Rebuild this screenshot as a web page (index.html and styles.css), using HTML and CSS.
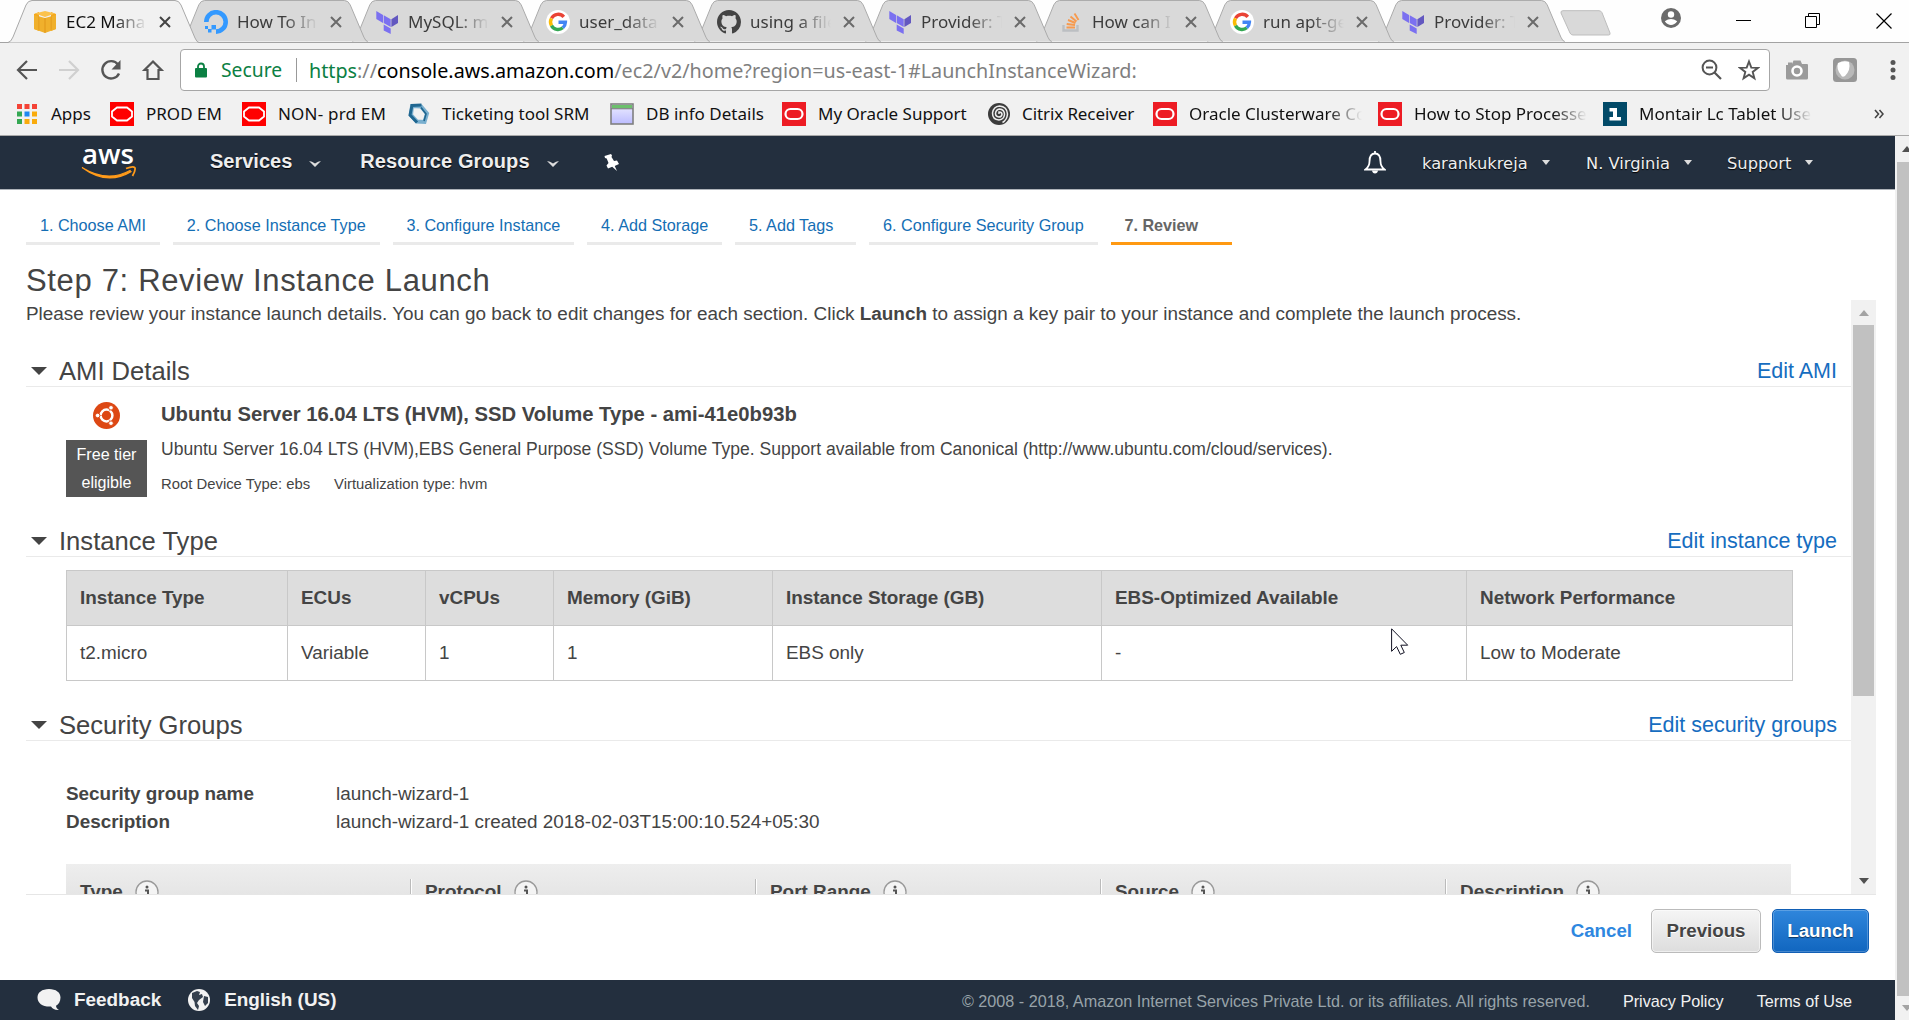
FILE: index.html
```html
<!DOCTYPE html>
<html lang="en">
<head>
<meta charset="utf-8">
<title>EC2 Management Console</title>
<link rel="stylesheet" href="styles.css">
</head>
<body>
<svg class="defs" aria-hidden="true">
  <defs>
    <symbol id="tab-shape" viewBox="0 0 191 43"><path d="M0 42.5Q3 42 5 37L18 5Q20 .5 24 .5H167Q171 .5 173 5L187 38Q189 42.5 191 42.5"/></symbol>
    <symbol id="close" viewBox="0 0 12 12"><path d="M1 1l10 10M11 1L1 11" fill="none" stroke="currentColor" stroke-width="2"/></symbol>
    <symbol id="terraform" viewBox="0 0 24 24"><path fill="#7b70f0" d="M1.3 1l6.700 4v8L1.300 9zM8.700 5.200l7 4v7.800l-7-4zM8.700 14.500l7 4V24l-7-3.500z"/><path fill="#6358c0" d="M16.400 9.200L23 5v8l-6.600 4z"/></symbol>
    <symbol id="google" viewBox="0 0 24 24"><circle cx="12" cy="12" r="12" fill="#fff"/><g fill="none" stroke-width="3.400"><path stroke="#ea4335" d="M17.800 6.900A7.500 7.500 0 0 0 5.500 8.300"/><path stroke="#fbbc05" d="M5.500 8.300a7.500 7.500 0 0 0 0 7.400"/><path stroke="#34a853" d="M5.500 15.700a7.500 7.500 0 0 0 11.300 2.100"/><path stroke="#4285f4" d="M16.800 17.800a7.500 7.500 0 0 0 2.600-5.500H12.500"/></g></symbol>
    <symbol id="oracle" viewBox="0 0 24 24"><rect width="24" height="24" fill="#ed1c24"/><rect x="3.500" y="7" width="17" height="10" rx="5" fill="none" stroke="#fff" stroke-width="2.200"/></symbol>
    <symbol id="oracle-em" viewBox="0 0 24 24"><rect width="24" height="24" fill="#f00"/><path d="M7 5.500h10l5 4v5l-5 4H7l-5-4v-5z" fill="none" stroke="#fff" stroke-width="1.800"/><ellipse cx="12" cy="12" rx="9" ry="4.600" fill="#f00"/></symbol>
    <symbol id="info" viewBox="0 0 24 24"><circle cx="12" cy="12" r="11" fill="#f4f4f4" stroke="#999" stroke-width="1.300"/><path d="M10 10.500h3V17M9.500 17.500h6" fill="none" stroke="#555" stroke-width="2"/><circle cx="12" cy="7" r="1.500" fill="#555"/></symbol>
  </defs>
</svg>

<header class="chrome">
  <div class="tabstrip">
    <div class="tab active"><svg class="shape"><use href="#tab-shape"/></svg>
      <svg class="fav" viewBox="0 0 24 24"><path fill="#f5a81c" d="M1 4l5-2v19l-5-2zM18 2l5 2v15l-5 2z"/><path fill="#f0b02c" d="M1 5l11 3 11-3v14l-11 4-11-4z"/><path fill="#fbc24c" d="M2 3.500L12 1l10 2.500L12 7z"/><path fill="#d98c10" d="M11 8h2v15h-2zM5 6l1.500.500V20L5 19.500zM19 6l-1.500.500V20l1.500-.500z" opacity=".35"/></svg>
      <span class="title">EC2 Mana</span><svg class="x"><use href="#close"/></svg></div>
    <div class="tab"><svg class="shape"><use href="#tab-shape"/></svg>
      <svg class="fav" viewBox="0 0 24 24"><path d="M2.300 12A9.700 9.700 0 1 1 12 21.600" fill="none" stroke="#3399ff" stroke-width="4.600"/><path fill="#3399ff" d="M7.500 15H12v4.500H7.500zM4 19h3.500v3.500H4zM1 16h3v3H1z"/></svg>
      <span class="title">How To In</span><svg class="x"><use href="#close"/></svg></div>
    <div class="tab"><svg class="shape"><use href="#tab-shape"/></svg><svg class="fav"><use href="#terraform"/></svg><span class="title">MySQL: m</span><svg class="x"><use href="#close"/></svg></div>
    <div class="tab"><svg class="shape"><use href="#tab-shape"/></svg><svg class="fav"><use href="#google"/></svg><span class="title">user_data</span><svg class="x"><use href="#close"/></svg></div>
    <div class="tab"><svg class="shape"><use href="#tab-shape"/></svg>
      <svg class="fav" viewBox="0 0 16 16"><path fill="#444" fill-rule="evenodd" d="M8 0C3.580 0 0 3.580 0 8c0 3.540 2.290 6.530 5.470 7.590.4.070.55-.17.55-.38 0-.19-.01-.82-.01-1.490-2.010.37-2.530-.49-2.690-.94-.09-.23-.48-.94-.82-1.130-.28-.15-.68-.52-.01-.53.63-.01 1.080.58 1.230.82.72 1.210 1.870.87 2.330.66.07-.52.28-.87.51-1.070-1.780-.2-3.640-.89-3.640-3.950 0-.87.31-1.590.82-2.150-.08-.2-.36-1.020.08-2.120 0 0 .67-.21 2.200.82.64-.18 1.320-.27 2-.27s1.360.09 2 .27c1.530-1.040 2.200-.82 2.200-.82.44 1.100.16 1.920.08 2.120.51.56.82 1.270.82 2.150 0 3.070-1.870 3.750-3.650 3.950.29.25.54.73.54 1.480 0 1.070-.01 1.930-.01 2.200 0 .21.15.46.55.38A8.010 8.010 0 0 0 16 8c0-4.420-3.580-8-8-8z"/></svg>
      <span class="title">using a file</span><svg class="x"><use href="#close"/></svg></div>
    <div class="tab"><svg class="shape"><use href="#tab-shape"/></svg><svg class="fav"><use href="#terraform"/></svg><span class="title">Provider: T</span><svg class="x"><use href="#close"/></svg></div>
    <div class="tab"><svg class="shape"><use href="#tab-shape"/></svg>
      <svg class="fav" viewBox="0 0 24 24"><path d="M4.500 15v5.500h14V15" fill="none" stroke="#bcbfc2" stroke-width="2.400"/><path d="M7.500 17.500h8.500M7.700 14l8.300 1M9 10l7.500 3M11.500 6.500l6 5M15.500 3.500l4 6.500" stroke="#f79a4e" stroke-width="1.900"/></svg>
      <span class="title">How can I</span><svg class="x"><use href="#close"/></svg></div>
    <div class="tab"><svg class="shape"><use href="#tab-shape"/></svg><svg class="fav"><use href="#google"/></svg><span class="title">run apt-ge</span><svg class="x"><use href="#close"/></svg></div>
    <div class="tab"><svg class="shape"><use href="#tab-shape"/></svg><svg class="fav"><use href="#terraform"/></svg><span class="title">Provider: T</span><svg class="x"><use href="#close"/></svg></div>
    <svg class="newtab" viewBox="0 0 51 26"><path d="M3 .7h36q2 0 3 2L50 23q.6 2-1.500 2H13q-2 0-3-2L1 3Q.5.7 3 .7z" fill="#d9d9d9" stroke="#bdbdbd"/></svg>
    <div class="window-controls">
      <svg width="20" height="20" viewBox="0 0 20 20"><circle cx="10" cy="10" r="10" fill="#6b6b6b"/><circle cx="10" cy="6.500" r="3.200" fill="#fff"/><path d="M3.800 13.200q6.200-4.600 12.400 0Q13.500 17 10 17t-6.200-3.800z" fill="#fff"/></svg>
      <svg width="16" height="16" viewBox="0 0 16 16"><path d="M0 7.500h15" stroke="#000"/></svg>
      <svg width="16" height="16" viewBox="0 0 16 16"><path d="M.5 3.500h11v11H.5zM3.500 3V.5h11v11H12" fill="none" stroke="#000"/></svg>
      <svg width="16" height="16" viewBox="0 0 16 16"><path d="M.5.500l15 15M15.500.500l-15 15" stroke="#000" stroke-width="1.200"/></svg>
    </div>
  </div>

  <div class="toolbar">
    <svg class="tool" viewBox="0 0 24 24"><path d="M22 12H3.500M12 3L3 12l9 9" fill="none" stroke="#555" stroke-width="2.200"/></svg>
    <svg class="tool" viewBox="0 0 24 24"><path d="M2 12h18.500M12 3l9 9-9 9" fill="none" stroke="#d0d0d0" stroke-width="2.200"/></svg>
    <svg class="tool" viewBox="0 0 24 24"><path d="M20 15.500A8.700 8.700 0 1 1 19 6.500" fill="none" stroke="#555" stroke-width="2.400"/><path d="M21.500 2v9.500H12.500z" fill="#555"/></svg>
    <svg class="tool" viewBox="0 0 24 24"><path d="M12 3.500l8.500 8.500H17.500v9h-11v-9H3.500z" fill="none" stroke="#555" stroke-width="2.200"/></svg>
    <div class="omnibox">
      <svg class="lock" viewBox="0 0 12 16"><path d="M3 7V4.500a3 3 0 0 1 6 0V7" fill="none" stroke="#0b8043" stroke-width="1.800"/><rect y="6" width="12" height="9.500" rx="1" fill="#0b8043"/></svg>
      <span class="secure">Secure</span>
      <span class="url"><i>https</i>://<b>console.aws.amazon.com</b>/ec2/v2/home?region=us-east-1#LaunchInstanceWizard:</span>
      <svg class="zoom" viewBox="0 0 22 22"><circle cx="8.500" cy="8.500" r="6.900" fill="none" stroke="#555" stroke-width="2"/><path d="M5 8.500h7M13.500 13.500l6.500 6.500" stroke="#555" stroke-width="2.200"/></svg>
      <svg class="star" viewBox="0 0 22 22"><path d="M11 2.500l2.300 6.100 6.500.3-5.100 4 1.700 6.300-5.400-3.600-5.400 3.600 1.700-6.300-5.100-4 6.500-.3z" fill="none" stroke="#555" stroke-width="1.900"/></svg>
    </div>
    <svg class="ext" viewBox="0 0 24 24"><path d="M1 7h2V4.500h4V6l1.500-3.500h7L17 6h5q1 0 1 1v13q0 1.500-1.500 1.500h-19Q1 21.500 1 20z" fill="#9b9b9b"/><circle cx="12" cy="13" r="4.500" fill="#9b9b9b" stroke="#fff" stroke-width="2.600"/></svg>
    <svg class="ext" viewBox="0 0 24 24"><rect width="24" height="24" rx="3.500" fill="#979797"/><circle cx="12" cy="12" r="9.500" fill="#b9b9b9"/><path d="M5 5q6-3 11-1 2 8-4 14-3 2-4-1Q3 11 5 5z" fill="#fff"/></svg>
    <svg class="dots" viewBox="0 0 6 20"><g fill="#555"><circle cx="3" cy="2.500" r="2.500"/><circle cx="3" cy="10" r="2.500"/><circle cx="3" cy="17.500" r="2.500"/></g></svg>
  </div>

  <nav class="bookmarks">
    <a class="apps"><svg viewBox="0 0 20 20"><path fill="#f44336" d="M0 0h5v5H0zM7.500 0h5v5h-5zM15 0h5v5h-5z"/><path fill="#34a853" d="M0 7.500h5v5H0zM0 15h5v5H0z"/><path fill="#1e88f0" d="M7.500 7.500h5v5h-5z"/><path fill="#f9ab0c" d="M15 7.500h5v5h-5zM15 15h5v5h-5zM7.500 15h5v5h-5z"/></svg><span>Apps</span></a>
    <a><svg><use href="#oracle-em"/></svg><span>PROD EM</span></a>
    <a class="wider"><svg><use href="#oracle-em"/></svg><span>NON- prd EM</span></a>
    <a class="ticket"><svg viewBox="0 0 24 24"><path d="M5 4l9 .5 6 7-2.500 8.500-7.500-.5L4 13z" fill="none" stroke="#79afcf" stroke-width="4"/><path d="M14.500 3L5 3.500 3 13l7 7.500" fill="none" stroke="#1f6690" stroke-width="3"/><path d="M14 5.500l5 6.500-2 7" fill="none" stroke="#1f6690" stroke-width="1.600"/></svg><span>Ticketing tool SRM</span></a>
    <a><svg viewBox="0 0 24 24"><linearGradient id="win" x2="0" y2="1"><stop stop-color="#eeeeff"/><stop offset="1" stop-color="#bcbcff"/></linearGradient><rect x="1" y="2" width="22" height="20" fill="url(#win)" stroke="#808080" stroke-width="1.600"/><path d="M2 4.500h20" stroke="#6cc06c" stroke-width="3"/><path d="M1 6.700h22" stroke="#808080" stroke-width="1.200"/></svg><span>DB info Details</span></a>
    <a><svg><use href="#oracle"/></svg><span>My Oracle Support</span></a>
    <a class="citrix"><svg viewBox="0 0 24 24"><circle cx="12" cy="12" r="11" fill="#3c3c3c"/><g fill="none" stroke="#eee" stroke-width="1.500"><path d="M12 12v-2q3 0 3 2.500Q14.500 15 12 15q-3.500-.5-3.500-3.500Q9 7.500 12.500 7q5 .5 5 5.500-.5 5-5.500 5.500-6.500-.5-6.500-7Q6.500 4.500 12.500 4q7.500.5 8 8-.5 6-5 8.500"/></g></svg><span>Citrix Receiver</span></a>
    <a><svg><use href="#oracle"/></svg><span class="fade">Oracle Clusterware Co</span></a>
    <a><svg><use href="#oracle"/></svg><span class="fade">How to Stop Processe</span></a>
    <a><svg viewBox="0 0 24 24"><rect width="24" height="24" fill="#024a68"/><path d="M6.500 6H14v9h4v3.500H6.500V15H10V9.500H6.500z" fill="#fff"/></svg><span class="fade">Montair Lc Tablet Use</span></a>
    <svg class="more" viewBox="0 0 10 10"><path d="M1 1l3.500 4L1 9M5.500 1L9 5 5.500 9" fill="none" stroke="#444" stroke-width="1.600"/></svg>
  </nav>
</header>

<div class="viewport">
  <div class="console">
    <nav class="awsnav">
      <div class="logo"><span>aws</span><svg viewBox="0 0 56 13"><path d="M1 1.500Q26 17 49 4.500l1 1.200Q26 20 1 1.500z" fill="#ff9b1a" stroke="#ff9b1a" stroke-width="1.200"/><path d="M45 2.500q7-2.500 8.800-.9Q55 4 51.500 10" fill="none" stroke="#ff9b1a" stroke-width="1.800"/></svg></div>
      <a class="menu services">Services<svg viewBox="0 0 12 7"><path d="M0 1q3 0 6 2.500Q9 1 12 1L6 7z" fill="#ddd"/></svg></a>
      <a class="menu groups">Resource Groups<svg viewBox="0 0 12 7"><path d="M0 1q3 0 6 2.500Q9 1 12 1L6 7z" fill="#ddd"/></svg></a>
      <svg class="pin" viewBox="0 0 16 17"><path d="M1.500 2L8 0l1 1.500L8.500 3 11 7l3-.5 2 3.500-4.300 2L14 17l-4.800-4.200L5 14.500l-1.500-3L5.500 9 3.700 4.500 2 4z" fill="#fff"/></svg>
      <svg class="bell" viewBox="0 0 22 23"><path d="M11 2.500c-4 0-5.500 3.500-5.500 8 0 4-1.500 6-4 8h19c-2.500-2-4-4-4-8 0-4.500-1.500-8-5.500-8z" fill="none" stroke="#fff" stroke-width="1.800"/><path d="M11 0v3" stroke="#fff" stroke-width="1.800"/><path d="M8 19.500h6q-.5 3-3 3t-3-3z" fill="#fff"/></svg>
      <a class="account user">karankukreja</a>
      <a class="account region">N. Virginia</a>
      <a class="account support">Support</a>
    </nav>

    <main class="page">
      <ol class="steps">
        <li>1. Choose AMI</li><li>2. Choose Instance Type</li><li>3. Configure Instance</li><li>4. Add Storage</li><li>5. Add Tags</li><li>6. Configure Security Group</li><li class="current">7. Review</li>
      </ol>
      <h1>Step 7: Review Instance Launch</h1>
      <div class="scroller">
        <div class="content">
          <p class="intro">Please review your instance launch details. You can go back to edit changes for each section. Click <b>Launch</b> to assign a key pair to your instance and complete the launch process.</p>

          <div class="section-head"><h2>AMI Details</h2><a>Edit AMI</a></div>
          <div class="ami">
            <div class="ami-side">
              <svg viewBox="0 0 27 27"><circle cx="13.500" cy="13.500" r="13.500" fill="#dd4814"/><circle cx="13.500" cy="13.500" r="5.900" fill="none" stroke="#fff" stroke-width="2.500"/><path d="M13.500 13.500l5-8.500M13.500 13.500l5 8.500M13.500 13.500H4" stroke="#dd4814" stroke-width=".8" opacity=".6"/><g fill="#fff" stroke="#dd4814" stroke-width=".9"><circle cx="4.600" cy="13.500" r="2.300"/><circle cx="18" cy="5.800" r="2.300"/><circle cx="18" cy="21.200" r="2.300"/></g></svg>
              <div class="free">Free tier<br>eligible</div>
            </div>
            <div class="ami-info">
              <h3>Ubuntu Server 16.04 LTS (HVM), SSD Volume Type - ami-41e0b93b</h3>
              <p>Ubuntu Server 16.04 LTS (HVM),EBS General Purpose (SSD) Volume Type. Support available from Canonical (http://www.ubuntu.com/cloud/services).</p>
              <small><span>Root Device Type: ebs</span><span>Virtualization type: hvm</span></small>
            </div>
          </div>

          <div class="section-head"><h2>Instance Type</h2><a>Edit instance type</a></div>
          <table class="instance">
            <colgroup><col class="c1"><col class="c2"><col class="c3"><col class="c4"><col class="c5"><col class="c6"><col class="c7"></colgroup>
            <tr><th>Instance Type</th><th>ECUs</th><th>vCPUs</th><th>Memory (GiB)</th><th>Instance Storage (GB)</th><th>EBS-Optimized Available</th><th>Network Performance</th></tr>
            <tr><td>t2.micro</td><td>Variable</td><td>1</td><td>1</td><td>EBS only</td><td>-</td><td>Low to Moderate</td></tr>
          </table>

          <div class="section-head"><h2>Security Groups</h2><a>Edit security groups</a></div>
          <dl class="group">
            <dt>Security group name</dt><dd>launch-wizard-1</dd>
            <dt>Description</dt><dd>launch-wizard-1 created 2018-02-03T15:00:10.524+05:30</dd>
          </dl>
          <div class="rules">
            <div>Type<svg><use href="#info"/></svg></div><div>Protocol<svg><use href="#info"/></svg></div><div>Port Range<svg><use href="#info"/></svg></div><div>Source<svg><use href="#info"/></svg></div><div>Description<svg><use href="#info"/></svg></div>
          </div>
        </div>
        <div class="scrollbar inner"><i class="up"></i><div class="thumb"></div><i class="down"></i></div>
      </div>
      <div class="actions"><a>Cancel</a><button>Previous</button><button class="primary">Launch</button></div>
    </main>

    <footer class="awsfooter">
      <svg class="bubble" viewBox="0 0 24 22"><path d="M12 0c7 0 11.500 3.500 11.500 8.500 0 4-2 7-4.500 8.200.2 2 1.300 3.500 3 4.300-3.500.5-6.500-1-8-3.500C6 18 .5 14.500.5 8.500.5 3.500 5 0 12 0z" fill="#f2f2f2"/></svg>
      <b>Feedback</b>
      <svg class="globe" viewBox="0 0 22 22"><circle cx="11" cy="11" r="11" fill="#f2f2f2"/><path d="M4 4l5-2 3 1-1 3 3-1 1 3-4 3-2 3 2 3-1 4-3-4-.5-4L4 9zM16 7l4 1v6l-3 3-2-4z" fill="#35404e"/></svg>
      <b>English (US)</b>
      <span class="copyright">© 2008 - 2018, Amazon Internet Services Private Ltd. or its affiliates. All rights reserved.</span>
      <a>Privacy Policy</a><a>Terms of Use</a>
    </footer>
  </div>
  <div class="scrollbar outer"><i class="up"></i><div class="thumb"></div><i class="down"></i></div>
</div>

<svg class="cursor" viewBox="0 0 18 27"><path d="M.6.800v22.500l5-4.700 3.700 7.700 4-1.800-3.500-7.300h6.900z" fill="#fff" stroke="#111122" stroke-width="1"/></svg>
</body>
</html>
```
FILE: styles.css
```css
* { box-sizing: border-box; }
body { margin: 0; width: 1909px; height: 1020px; overflow: hidden; background: #fff; color: #444; font: 18.9px/28px "Liberation Sans", Arial, sans-serif; }
h1, h2, h3, p, ol, dl, dd { margin: 0; padding: 0; font-weight: normal; }
svg { flex: none; display: block; }
.defs { position: absolute; width: 0; height: 0; }

/* Browser frame */
.chrome { height: 136px; background: #f1f1f1; border-bottom: 1px solid #a9a9a9; color: #111; font-family: "Noto Sans", "Open Sans", sans-serif; }
.tabstrip { display: flex; height: 43px; padding-left: 8px; background: #fefefe; border-bottom: 1px solid #a3a3a3; }
.tab { position: relative; display: flex; align-items: center; flex: none; width: 191px; height: 43px; margin-right: -20px; padding: 1px 0 0 25px; color: #3c3c3c; }
.tab .shape { position: absolute; inset: 0; width: 191px; height: 43px; fill: #d9d9d9; stroke: #a9a9a9; }
.tab.active { color: #111; }
.tab.active .shape { fill: #f1f1f1; }
.tab:nth-child(1) { z-index: 9; }
.tab:nth-child(2) { z-index: 8; }
.tab:nth-child(3) { z-index: 7; }
.tab:nth-child(4) { z-index: 6; }
.tab:nth-child(5) { z-index: 5; }
.tab:nth-child(6) { z-index: 4; }
.tab:nth-child(7) { z-index: 3; }
.tab:nth-child(8) { z-index: 2; }
.tab:nth-child(9) { z-index: 1; }
.tab:not(.active) { height: 42px; }
.tab:not(.active) .shape { height: 42px; }
.fav, .title, .x { position: relative; }
.fav { width: 24px; height: 24px; }
.title { width: 81px; margin: 0 12px 0 9px; white-space: nowrap; font-size: 17px; line-height: 26px; -webkit-mask-image: linear-gradient(90deg, #000 58%, transparent); mask-image: linear-gradient(90deg, #000 58%, transparent); }
.x { width: 12px; height: 12px; color: #6b6b6b; }
.active .x { color: #444; }
.tabstrip .newtab { width: 51px; height: 26px; margin: 10px 0 0 13px; }
.window-controls { display: flex; flex: 1; align-items: flex-start; padding: 13px 19px 0 50px; }
.window-controls svg { margin-right: 53px; }
.window-controls svg:first-child { margin: -5px 55px 0 0; }
.window-controls svg:last-child { margin-right: 0; margin-left: 2px; }

.toolbar { display: flex; align-items: center; height: 54px; padding-left: 15px; }
.tool { width: 24px; height: 24px; margin-right: 18px; }
.omnibox { display: flex; align-items: center; width: 1590px; height: 42px; margin-left: -3px; padding-left: 14px; background: #fff; border: 1px solid #a6a6a6; border-radius: 4px; font-size: 19.75px; line-height: 30px; }
.lock { width: 12px; height: 16px; margin-right: 14px; }
.secure { width: 76px; margin-right: 12px; line-height: 24px; border-right: 1px solid #999; color: #0b8043; font-size: 19.3px; }
.url { flex: 1; padding-top: 1px; color: #7f7f7f; white-space: nowrap; }
.url i { color: #0b8043; font-style: normal; }
.url b { color: #000; font-weight: normal; }
.zoom, .star { width: 22px; height: 22px; }
.star { margin: 0 9px 0 15px; }
.ext { width: 24px; height: 24px; margin-left: 15px; }
.ext + .ext { margin-left: 24px; }
.dots { width: 6px; height: 20px; margin-left: 33px; }

.bookmarks { display: grid; grid-template-columns: 93px 132px 165px 203px 172px 205px 166px 225px 225px 271px 12px; align-items: center; height: 34px; padding-left: 17px; font-size: 17px; line-height: 26px; white-space: nowrap; }
.bookmarks a { display: flex; align-items: center; gap: 12px; }
.bookmarks a svg { width: 24px; height: 24px; }
.bookmarks .apps { gap: 14px; }
.bookmarks .apps svg { width: 20px; height: 20px; }
.bookmarks .wider span { letter-spacing: .2px; }
.bookmarks .ticket { gap: 11px; }
.bookmarks .citrix { gap: 11px; }
.bookmarks .citrix span { letter-spacing: -.1px; }
.bookmarks .fade { width: 173px; -webkit-mask-image: linear-gradient(90deg, #000 80%, transparent); mask-image: linear-gradient(90deg, #000 80%, transparent); }
.more { width: 10px; height: 10px; }

/* Console */
.viewport { display: flex; height: 884px; }
.console { display: flex; flex-direction: column; width: 1895px; }
.awsnav { display: flex; align-items: center; height: 54px; background: #232f3e; border-bottom: 1px solid #aeb3b9; color: #eee; text-shadow: 0 1px 1px #000; }
.logo { width: 56px; margin-left: 81px; text-shadow: none; }
.logo span { display: block; height: 28px; margin-top: -10px; color: #fff; font: 600 27.6px/32px "Open Sans", sans-serif; padding-left: 1px; }
.logo svg { width: 56px; height: 13px; margin-top: 1px; }
.menu { display: flex; align-items: center; font-size: 20px; font-weight: bold; line-height: 28px; margin-top: -3px; white-space: nowrap; }
.menu svg { width: 12px; height: 7px; margin: 4px 0 0 17px; }
.services { margin-left: 73px; }
.groups { margin-left: 39px; letter-spacing: .1px; }
.pin { width: 16px; height: 17px; margin-left: 44px; }
.bell { width: 22px; height: 23px; margin-left: auto; }
.account { display: flex; align-items: center; font: 16.3px/24px "DejaVu Sans", Verdana, sans-serif; margin-top: 3px; }
.account::after { content: ""; margin: -3px 0 0 14px; border: 4.5px solid transparent; border-top: 5.500px solid #ddd; border-bottom: 0; }
.user { width: 164px; margin-left: 36px; }
.region { width: 141px; }
.support { width: 168px; }

.page { display: flex; flex-direction: column; height: 790px; padding-left: 26px; }
.steps { display: flex; gap: 13px; margin-top: 18px; list-style: none; font-size: 16.2px; line-height: 34px; }
.steps li { min-width: 121px; padding: 0 13.900px; border-bottom: 3px solid #eaeaea; color: #146eb4; white-space: nowrap; }
.steps .current { border-color: #ff9912; color: #666; font-weight: bold; }
h1 { margin-top: 16px; font-size: 31px; line-height: 39px; letter-spacing: .66px; }
.scroller { display: flex; width: 1850px; height: 595px; overflow: hidden; border-bottom: 1px solid #e6e6e6; }
.content { width: 1825px; }
.intro { white-space: nowrap; line-height: 27px; margin-bottom: 29px; }
.section-head { display: flex; justify-content: space-between; height: 31px; border-bottom: 1px solid #eaeaea; line-height: 30px; }
.section-head h2 { display: flex; align-items: center; font-size: 25.6px; }
.section-head h2::before { content: ""; margin: 0 12px 0 5px; border: 8px solid transparent; border-top: 8px solid #444; border-bottom: 0; }
.section-head a { padding-right: 14px; color: #166dc0; font-size: 21.5px; line-height: 30px; }
.ami { display: flex; gap: 14px; height: 139px; padding: 15px 0 0 40px; }
.ami-side { width: 81px; }
.ami-side svg { width: 27px; height: 27px; margin: 0 auto 11px; }
.free { height: 57px; background: #555; color: #fff; font-size: 16.1px; text-align: center; }
.ami-info { padding-top: 1px; white-space: nowrap; }
.ami-info h3 { height: 33px; font-size: 20.25px; line-height: 22px; font-weight: bold; }
.ami-info p { height: 35px; font-size: 17.55px; line-height: 26px; }
.ami-info small { display: flex; gap: 24px; font-size: 14.85px; line-height: 26px; }
.instance { width: 1727px; margin: 13px 0 29px 40px; border-collapse: collapse; table-layout: fixed; }
.c1 { width: 221px; } .c2 { width: 138px; } .c3 { width: 128px; } .c4 { width: 219px; } .c5 { width: 329px; } .c6 { width: 365px; } .c7 { width: 326px; }
.instance th, .instance td { height: 55px; padding: 0 13px; border: 1px solid #c8c8c8; text-align: left; line-height: 28px; }
.instance th { background: #ddd; }
.group { display: grid; grid-template-columns: 270px 1fr; margin: 39px 0 28px 40px; }
.group dt, .rules { font-weight: bold; }
.rules { display: grid; grid-template-columns: 344px 345px 345px 345px 346px; width: 1725px; height: 56px; margin-left: 40px; background: linear-gradient(#eee, #dedede); }
.rules div { display: flex; align-items: center; gap: 12px; padding-left: 15px; }
.rules div:first-child { padding-left: 14px; }
.rules div + div { background: linear-gradient(90deg, #bbb 1px, #fff 1px 2px, transparent 2px) no-repeat 0 15px; }
.rules svg { width: 24px; height: 24px; margin-top: -1px; }

.actions { display: flex; align-items: flex-start; justify-content: flex-end; padding: 14px 26px 0 0; }
.actions a { margin: 8px 19px 0 0; color: #2e87e0; font-weight: bold; font-size: 18.7px; }
.actions button { width: 110px; height: 44px; padding: 0; border: 1px solid #bbb; border-radius: 5px; background: linear-gradient(#f5f5f5, #ddd); box-shadow: inset 0 0 0 1px #fff8; color: #444; font: bold 18.7px "Liberation Sans", Arial, sans-serif; text-shadow: 0 1px 0 #fff; }
.actions .primary { width: 97px; margin-left: 11px; border-color: #115fb5; background: linear-gradient(#2f86dc, #1166bf); box-shadow: inset 0 0 0 1px #ffffff38; color: #fff; text-shadow: 0 1px 1px #0008; }

.awsfooter { display: flex; align-items: center; height: 40px; background: #232f3e; color: #f2f2f2; padding: 0 43px 0 37px; white-space: nowrap; }
.bubble { width: 24px; height: 22px; margin-right: 13px; }
.globe { width: 22px; height: 22px; margin: 0 14px 0 27px; }
.copyright { margin-left: auto; color: #98a3a9; }
.awsfooter span, .awsfooter a { font-size: 16.2px; padding-top: 1px; }
.awsfooter a { margin-left: 33px; }

/* Scrollbars */
.scrollbar { display: flex; flex-direction: column; align-items: center; justify-content: space-between; width: 25px; background: #f1f1f1; overflow: hidden; }
.scrollbar .thumb { width: 21px; background: #c1c1c1; }
.scrollbar i { flex: none; border: 5.500px solid transparent; }
.up { border-top: 0 !important; border-bottom: 6px solid #a3a3a3 !important; }
.down { border-bottom: 0 !important; border-top: 6px solid #505050 !important; }
.inner .up { margin: 10px 0 9px; }
.inner .thumb { height: 371px; margin-bottom: auto; }
.inner .down { margin-bottom: 10px; }
.outer { width: 14px; align-items: flex-start; }
.outer .up { margin: 10px 0 10px 7px; border-bottom-color: #505050 !important; }
.outer .thumb { height: 834px; margin: 0 0 auto 2px; }
.outer .down { margin: 0 0 9px 7px; border-top-color: #a3a3a3 !important; }

.cursor { position: absolute; left: 1391px; top: 628px; width: 18px; height: 27px; z-index: 20; }
```
